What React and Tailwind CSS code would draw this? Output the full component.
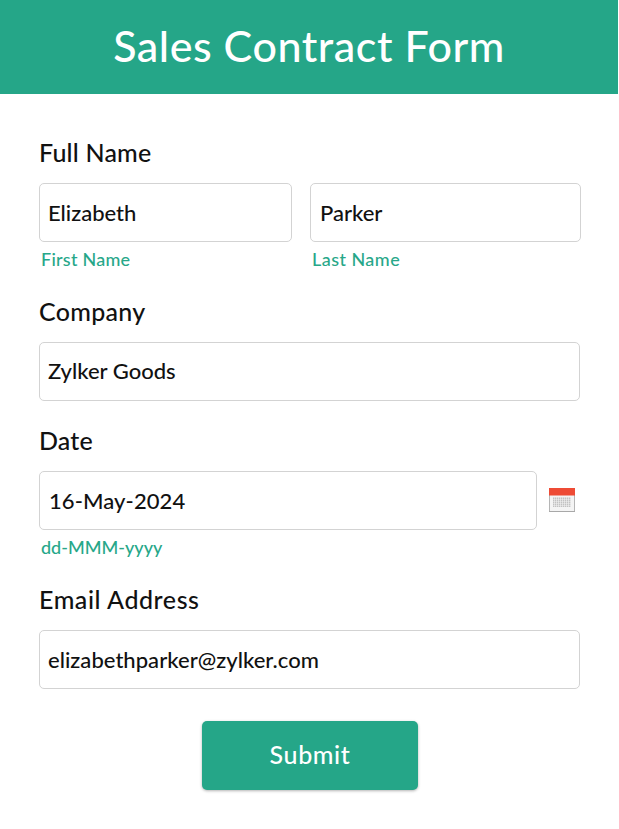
import React from "react";

function Label({ children, className = "" }) {
  return (
    <div className={`h-[30px] mb-[16px] text-[25px] leading-[30px] whitespace-nowrap ${className}`}>
      {children}
    </div>
  );
}

function Field({ value, className = "pl-[8px]" }) {
  return (
    <div className={`flex h-[59px] items-center rounded-[5px] border border-[#d3d3d3] bg-white text-[22px] whitespace-nowrap ${className}`}>
      {value}
    </div>
  );
}

function Hint({ children, className = "" }) {
  return (
    <div className={`mt-[5px] h-[24px] pl-[2px] text-[18px] leading-[24px] text-[#27a789] whitespace-nowrap ${className}`}>
      {children}
    </div>
  );
}

const columns = [4, 6, 8, 10, 12, 14, 16, 18, 20];
const rows = [9.5, 11.5, 13.5, 15.5, 17.5];

function CalendarIcon() {
  return (
    <svg width="26" height="24" viewBox="0 0 26 24" className="-translate-y-px" aria-hidden="true">
      <rect x="0.5" y="0.5" width="25" height="23" fill="#f4f4f4" stroke="#b5b5b5" />
      <rect x="0" y="0" width="26" height="7.5" fill="#ee4b35" />
      {rows.map((y) =>
        columns.map((x) => (
          <rect key={`${x}-${y}`} x={x} y={y} width="1.4" height="1.4" fill="#bdbdbd" />
        ))
      )}
      <path d="M0 23.5H26" stroke="#a8a8a8" />
    </svg>
  );
}

export default function App() {
  return (
    <main className="h-[829px] w-[619px] overflow-hidden bg-white font-['Lato',sans-serif] font-medium text-[#111]">
      <header className="flex h-[93.5px] w-[618px] items-center justify-center bg-[#25a688] pb-[2px]">
        <h1 className="text-[43px] leading-[52px] font-medium tracking-[0.55px] text-white">Sales Contract Form</h1>
      </header>
      <form className="flex flex-col px-[39px] pt-[43.5px]">
        <section className="h-[159px]">
          <Label className="tracking-[0.2px]">Full Name</Label>
          <div className="flex">
            <div className="mr-[18px] w-[253px]">
              <Field value="Elizabeth" />
              <Hint className="tracking-[0.25px]">First Name</Hint>
            </div>
            <div className="-mr-px w-[271px] shrink-0">
              <Field value="Parker" className="pl-[9px]" />
              <Hint className="tracking-[0.45px]">Last Name</Hint>
            </div>
          </div>
        </section>
        <section className="h-[129px]">
          <Label className="tracking-[0.3px]">Company</Label>
          <Field value="Zylker Goods" className="pb-[2px] pl-[8px]" />
        </section>
        <section className="h-[159px]">
          <Label className="tracking-[0.15px]">Date</Label>
          <div className="flex items-center gap-3">
            <Field value="16-May-2024" className="w-[498px] pl-[9px] tracking-[0.1px]" />
            <CalendarIcon />
          </div>
          <Hint>dd-MMM-yyyy</Hint>
        </section>
        <section className="h-[137px]">
          <Label className="tracking-[0.55px]">Email Address</Label>
          <Field value="elizabethparker@zylker.com" className="pl-[8px] tracking-[0.03px]" />
        </section>
        <button type="button" className="h-[69px] w-[216px] self-center rounded-[5px] bg-[#25a688] pb-[2px] pl-[1px] text-[25px] tracking-[0.6px] text-white shadow-[0_1px_3px_rgba(0,0,0,0.3)]">
          Submit
        </button>
      </form>
    </main>
  );
}
